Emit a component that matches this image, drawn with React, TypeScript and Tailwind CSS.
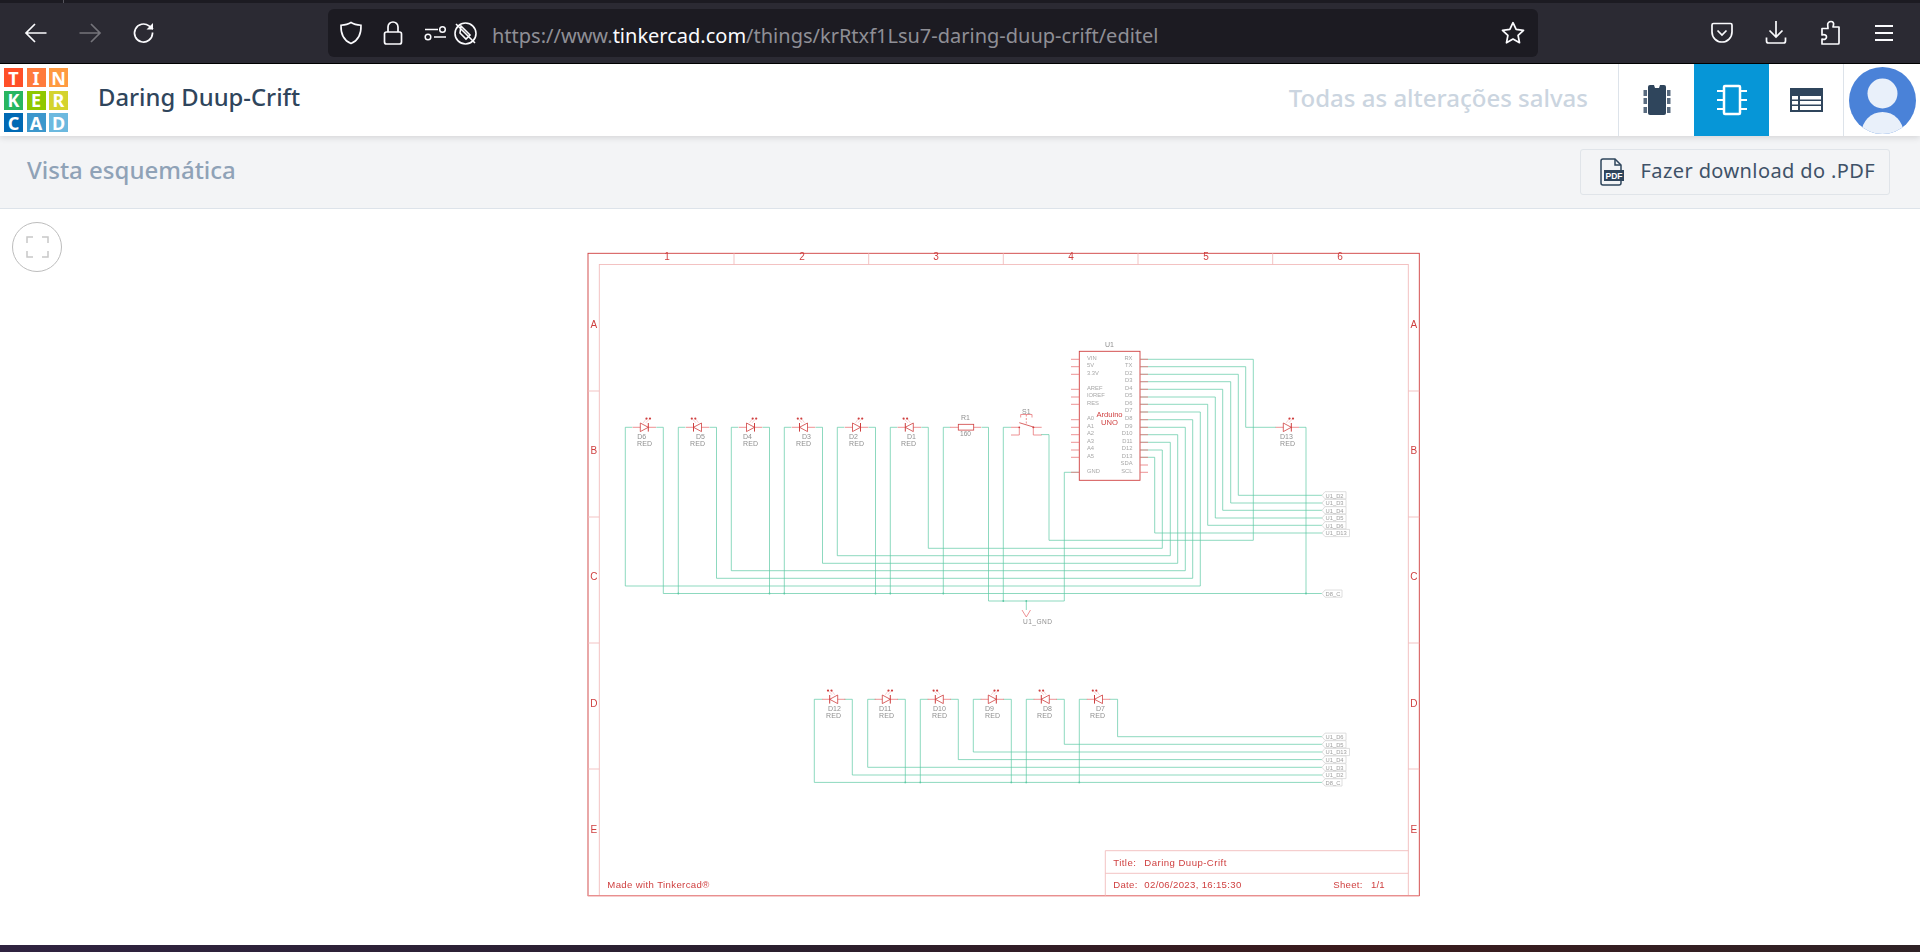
import React from "react";

const RED = "#cf3f3f";
const PIN = "#e8767a";
const WIRE = "#5cc8a4";
const GRAY = "#8f8f8f";
const F = "'Liberation Sans', Arial, sans-serif";

type LedP = { n: string; cx: number; cy: number; dir: 1 | -1; lx: number; rx: number; ly: number; ry: number };

function Led({ n, cx, cy, dir, lx, rx, ly, ry }: LedP) {
  const a = dir === 1 ? cx - 4 : cx + 4;
  const b = dir === 1 ? cx + 4 : cx - 4;
  const ax = dir === 1 ? 1 : -1;
  return (
    <g>
      <line x1={cx - 11.7} x2={cx + 11.7} y1={cy} y2={cy} stroke={PIN} strokeWidth={0.8} />
      <polygon points={`${a},${cy - 4.3} ${a},${cy + 4.3} ${b},${cy}`} fill="#fff" stroke={RED} strokeWidth={0.8} />
      <line x1={b} x2={b} y1={cy - 4.3} y2={cy + 4.3} stroke={RED} strokeWidth={1} />
      <line x1={cx - ax * 1} y1={cy - 4.5} x2={cx + ax * 2} y2={cy - 8.7} stroke="#f0a5a8" strokeWidth={0.5} />
      <line x1={cx + ax * 1.5} y1={cy - 4.5} x2={cx + ax * 5.5} y2={cy - 8.7} stroke="#f0a5a8" strokeWidth={0.5} />
      <circle cx={cx + ax * 2.2} cy={cy - 8.7} r={1.1} fill={RED} />
      <circle cx={cx + ax * 5.7} cy={cy - 8.7} r={1.1} fill={RED} />
      <text x={lx} y={ly} fontSize={7} fill={GRAY} fontFamily={F}>{n}</text>
      <text x={rx} y={ry} fontSize={7} fill={GRAY} fontFamily={F} textLength={15}>RED</text>
    </g>
  );
}

function Flag({ y, t, w }: { y: number; t: string; w: number }) {
  const x = 1322;
  return (
    <g>
      <polygon points={`${x},${y} ${x + 3},${y - 3.6} ${x + w},${y - 3.6} ${x + w},${y + 3.6} ${x + 3},${y + 3.6}`} fill="#fff" stroke="#d6d6d6" strokeWidth={0.8} />
      <text x={x + 3.5} y={y + 2.2} fontSize={5.8} fill="#a0a0a0" fontFamily={F}>{t}</text>
    </g>
  );
}

const pinsY = [359.3, 366.7, 374.3, 381.7, 389.3, 397, 404.3, 412, 419.7, 427.3, 434.7, 442.3, 450, 457.3, 465, 472.3];
const rightLabels = ["RX", "TX", "D2", "D3", "D4", "D5", "D6", "D7", "D8", "D9", "D10", "D11", "D12", "D13", "SDA", "SCL"];
const leftPins: [number, string][] = [
  [359.3, "VIN"], [366.7, "5V"], [374.3, "3.3V"], [389.3, "AREF"], [397, "IOREF"], [404.3, "RES"],
  [419.7, "A0"], [427.3, "A1"], [434.7, "A2"], [442.3, "A3"], [450, "A4"], [457.3, "A5"], [472.3, "GND"],
];

const topV: [number, number][] = [
  [625.3, 586], [663.3, 593.5], [678.3, 593.5], [716.5, 578.3], [731.3, 570.7], [769.5, 593.5], [784.3, 593.5],
  [822.5, 563.3], [837.3, 555.7], [875.5, 593.5], [890.3, 593.5], [928.3, 548.3], [943.3, 593.5], [988.5, 601], [1003.3, 601],
];
const topPairs: [number, number][] = [[625.3, 663.3], [678.3, 716.5], [731.3, 769.5], [784.3, 822.5], [837.3, 875.5], [890.3, 928.3], [943.3, 988.5]];

const wirePaths = [
  "M625.3 586H1200.3V412H1140",
  "M716.5 578.3H1192.7V419.7H1140",
  "M731.3 570.7H1185.3V427.3H1140",
  "M822.5 563.3H1177.7V434.7H1140",
  "M837.3 555.7H1170.3V442.3H1140",
  "M928.3 548.3H1162.3V450H1140",
  "M1049 434.6V540.3H1253.3V359.3H1140",
  "M1041 434.6H1049",
  "M1140 366.7H1245.7V427.3H1276",
  "M1140 374.3H1238.3V495.3H1322",
  "M1140 381.7H1230.7V503H1322",
  "M1140 389.3H1222.7V510.3H1322",
  "M1140 397H1215.3V518H1322",
  "M1140 404.3H1207.7V525.3H1322",
  "M1140 457.3H1154.7V533H1322",
  "M1299 427.3H1306V593.5H663.3",
  "M1306 593.5H1322",
  "M988.5 601H1064.3V472.3H1079",
  "M1026.3 601V610",
  "M1003.3 427.3H1011",
];

const bot: [number, number][] = [
  [814.3, 782.4], [852.3, 775], [867.7, 767.3], [905.3, 782.4], [920.3, 782.4], [958.3, 759.6], [973.3, 752],
  [1011.3, 782.4], [1026.3, 782.4], [1064.3, 744.3], [1079.3, 782.4], [1117.6, 736.7],
];

function Schematic() {
  const cols = [734, 868.7, 1003.3, 1138, 1272.7];
  const nums = [667, 802, 936, 1071, 1206, 1340];
  const rows = [391, 517, 643, 769];
  const letters: [string, number][] = [["A", 328], ["B", 454.3], ["C", 580.3], ["D", 706.5], ["E", 832.5]];
  return (
    <svg viewBox="585 250 838 650" width={838} height={650} className="block blur-[0.25px]">
      <rect x={588} y={253.3} width={831.3} height={642.4} fill="none" stroke={RED} strokeWidth={0.9} />
      <rect x={599.3} y={264.5} width={809} height={631} fill="none" stroke="#f2bcbc" strokeWidth={0.9} />
      <line x1={588} x2={1419} y1={895.7} y2={895.7} stroke="#e98f8f" strokeWidth={1.2} />
      {cols.map((x) => <line key={x} x1={x} x2={x} y1={253.3} y2={264.5} stroke="#f2bcbc" strokeWidth={0.9} />)}
      {nums.map((x, i) => <text key={x} x={x} y={259.5} textAnchor="middle" fontSize={10} fill={RED} fontFamily={F}>{i + 1}</text>)}
      {rows.map((y) => (
        <g key={y}>
          <line x1={588} x2={599.3} y1={y} y2={y} stroke="#f2bcbc" strokeWidth={0.9} />
          <line x1={1408.3} x2={1419.3} y1={y} y2={y} stroke="#f2bcbc" strokeWidth={0.9} />
        </g>
      ))}
      {letters.map(([l, y]) => (
        <g key={l}>
          <text x={593.8} y={y} textAnchor="middle" fontSize={10} fill={RED} fontFamily={F}>{l}</text>
          <text x={1413.8} y={y} textAnchor="middle" fontSize={10} fill={RED} fontFamily={F}>{l}</text>
        </g>
      ))}

      <g fill="none" stroke={WIRE} strokeWidth={0.7}>
        {topPairs.map(([a, b]) => <path key={a} d={`M${a} 427.3H${a + 7}M${b - 7} 427.3H${b}`} />)}
        {topV.map(([x, y]) => <line key={x} x1={x} x2={x} y1={427.3} y2={y} />)}
        {wirePaths.map((d) => <path key={d} d={d} />)}
        {bot.map(([x, y]) => <line key={x} x1={x} x2={x} y1={699.3} y2={y} />)}
        {[[814.3, 852.3], [867.7, 905.3], [920.3, 958.3], [973.3, 1011.3], [1026.3, 1064.3], [1079.3, 1117.6]].map(([a, b]) => (
          <path key={a} d={`M${a} 699.3H${a + 8}M${b - 8} 699.3H${b}`} />
        ))}
        <path d="M814.3 782.4H1322M852.3 775H1322M867.7 767.3H1322M958.3 759.6H1322M973.3 752H1322M1064.3 744.3H1322M1117.6 736.7H1322" />
      </g>
      <g fill={WIRE}>
        {[678.3, 769.5, 784.3, 875.5, 890.3, 943.3, 1306].map((x) => <circle key={x} cx={x} cy={593.5} r={0.9} />)}
        {[1003.3, 1026.3].map((x) => <circle key={x} cx={x} cy={601} r={0.9} />)}
        {[905.3, 920.3, 1011.3, 1026.3, 1079.3].map((x) => <circle key={x} cx={x} cy={782.4} r={0.9} />)}
      </g>

      <Led n="D6" cx={644.3} cy={427.3} dir={1} lx={637.3} rx={637} ly={438.8} ry={445.8} />
      <Led n="D5" cx={697.5} cy={427.3} dir={-1} lx={696} rx={690} ly={438.8} ry={445.8} />
      <Led n="D4" cx={750.5} cy={427.3} dir={1} lx={743} rx={743} ly={438.8} ry={445.8} />
      <Led n="D3" cx={803.5} cy={427.3} dir={-1} lx={802} rx={796} ly={438.8} ry={445.8} />
      <Led n="D2" cx={856.5} cy={427.3} dir={1} lx={849} rx={849} ly={438.8} ry={445.8} />
      <Led n="D1" cx={909.3} cy={427.3} dir={-1} lx={907} rx={901} ly={438.8} ry={445.8} />
      <Led n="D13" cx={1287.3} cy={427.3} dir={1} lx={1280} rx={1280} ly={438.8} ry={445.8} />

      <line x1={950} x2={981} y1={427.3} y2={427.3} stroke={PIN} strokeWidth={0.8} />
      <rect x={958.3} y={424.3} width={15.4} height={5.8} fill="#fff" stroke={RED} strokeWidth={0.8} />
      <text x={961} y={420} fontSize={7} fill={GRAY} fontFamily={F}>R1</text>
      <text x={960} y={435.5} fontSize={6.6} fill={GRAY} fontFamily={F}>160</text>

      <text x={1022} y={414} fontSize={7} fill={GRAY} fontFamily={F}>S1</text>
      <g fill="none" stroke={PIN} strokeWidth={0.8}>
        <path d="M1011 427.3H1019.3V435H1011M1041.7 427.3H1033.3V435H1041.7" />
        <path d="M1020.7 417.5V414.5H1032V417.5" />
        <path d="M1026.3 414.5V425" strokeDasharray="2 1.5" />
        <path d="M1019.3 422.7L1034.3 427.3" stroke={RED} />
      </g>
      <circle cx={1019.3} cy={427.3} r={0.9} fill={RED} />
      <circle cx={1033.3} cy={427.3} r={0.9} fill={RED} />

      <path d="M1022 610L1026.3 617L1030.5 610" fill="none" stroke={PIN} strokeWidth={0.8} />
      <text x={1023} y={623.5} fontSize={6.6} fill={GRAY} fontFamily={F} textLength={29}>U1_GND</text>

      <rect x={1079.3} y={351.3} width={60.7} height={129} fill="#fff" stroke={RED} strokeWidth={0.9} />
      {pinsY.map((y) => <line key={y} x1={1140} x2={1148} y1={y} y2={y} stroke={PIN} strokeWidth={0.8} />)}
      {leftPins.map(([y]) => <line key={y} x1={1071} x2={1079.3} y1={y} y2={y} stroke={PIN} strokeWidth={0.8} />)}
      {leftPins.map(([y, t]) => <text key={t} x={1087} y={y + 0.3} fontSize={5.8} fill="#a8a8a8" fontFamily={F}>{t}</text>)}
      {rightLabels.map((t, i) => <text key={t} x={1132.5} y={pinsY[i] + 0.3} textAnchor="end" fontSize={5.8} fill="#a8a8a8" fontFamily={F}>{t}</text>)}
      <text x={1109.5} y={347} textAnchor="middle" fontSize={7} fill={GRAY} fontFamily={F}>U1</text>
      <text x={1109.5} y={416.5} textAnchor="middle" fontSize={7.6} fill={RED} fontFamily={F}>Arduino</text>
      <text x={1109.5} y={424.5} textAnchor="middle" fontSize={7.6} fill={RED} fontFamily={F}>UNO</text>

      <Flag y={495.3} t="U1_D2" w={24} />
      <Flag y={503} t="U1_D3" w={24} />
      <Flag y={510.3} t="U1_D4" w={24} />
      <Flag y={518} t="U1_D5" w={24} />
      <Flag y={525.3} t="U1_D6" w={24} />
      <Flag y={533} t="U1_D13" w={27.5} />
      <Flag y={593.6} t="D8_C" w={20} />

      <Led n="D12" cx={833.7} cy={699.3} dir={-1} lx={828} rx={826} ly={711.3} ry={717.8} />
      <Led n="D11" cx={886.3} cy={699.3} dir={1} lx={879} rx={879} ly={711.3} ry={717.8} />
      <Led n="D10" cx={939.3} cy={699.3} dir={-1} lx={933} rx={932} ly={711.3} ry={717.8} />
      <Led n="D9" cx={992.3} cy={699.3} dir={1} lx={985} rx={985} ly={711.3} ry={717.8} />
      <Led n="D8" cx={1045.3} cy={699.3} dir={-1} lx={1043} rx={1037} ly={711.3} ry={717.8} />
      <Led n="D7" cx={1098.5} cy={699.3} dir={-1} lx={1096} rx={1090} ly={711.3} ry={717.8} />

      <Flag y={736.7} t="U1_D6" w={24} />
      <Flag y={744.3} t="U1_D5" w={24} />
      <Flag y={752} t="U1_D13" w={27.5} />
      <Flag y={759.6} t="U1_D4" w={24} />
      <Flag y={767.3} t="U1_D3" w={24} />
      <Flag y={775} t="U1_D2" w={24} />
      <Flag y={782.4} t="D8_C" w={20} />

      <path d="M1105.3 895.7V850.7H1408.3M1105.3 873.3H1408.3" fill="none" stroke="#f2bcbc" strokeWidth={0.9} />
      <g fontSize={9.6} fill={RED} fontFamily={F}>
        <text x={1113.3} y={866} textLength={22.5}>Title:</text>
        <text x={1144.3} y={866} textLength={82}>Daring Duup-Crift</text>
        <text x={1113.3} y={888} textLength={24}>Date:</text>
        <text x={1144.3} y={888} textLength={97}>02/06/2023, 16:15:30</text>
        <text x={1333.3} y={888} textLength={29}>Sheet:</text>
        <text x={1371} y={888} textLength={13.5}>1/1</text>
        <text x={607.3} y={888} textLength={102}>Made with Tinkercad®</text>
      </g>
    </svg>
  );
}

const ic = "fill-none stroke-current";

function Chrome() {
  return (
    <div className="flex flex-col bg-[#2b2a33] h-[64px] shrink-0 border-b border-black">
      <div className="flex h-[3px] bg-[#1c1b22]"><div className="w-[64px] border-r border-[#55545c]" /></div>
      <div className="flex items-center flex-1 pl-[9px] pr-[9px] text-[#fbfbfe]">
        <div className="flex items-center justify-center w-[54px] h-[30px]">
          <svg width="24" height="24" viewBox="0 0 24 24" className={ic} strokeWidth={1.7}><path d="M22.5 12H2M11 3L2 12l9 9" /></svg>
        </div>
        <div className="flex items-center justify-center w-[54px] h-[30px] text-[#75747b]">
          <svg width="24" height="24" viewBox="0 0 24 24" className={ic} strokeWidth={1.7}><path d="M1.5 12H22M13 3l9 9-9 9" /></svg>
        </div>
        <div className="flex items-center justify-center w-[54px] h-[30px]">
          <svg width="24" height="24" viewBox="0 0 24 24" className={ic} strokeWidth={1.7}><path d="M20.5 11.5v1a9 9 0 1 1-3.5-7.6L21 8" /><path d="M21 2v6.5h-6.5" fill="#fbfbfe" stroke="none" /></svg>
        </div>
        <div className="flex items-center h-[48px] w-[1210px] ml-[157px] bg-[#1c1b22] rounded-[6px] pl-[11px] pr-[12px]">
          <svg width="24" height="24" viewBox="0 0 24 24" className={`${ic} shrink-0`} strokeWidth={1.6}><path d="M12 1.5c3 2 6 2.5 10 2.7.3 8-1.7 14.800-10 18.300C3.700 19 1.700 12.200 2 4.200 6 4 9 3.500 12 1.500z" /></svg>
          <svg width="24" height="26" viewBox="0 0 24 26" className={`${ic} shrink-0 ml-[18px]`} strokeWidth={1.7}><rect x="3.500" y="12" width="17" height="12" rx="2" /><path d="M7 12V7a5 5 0 0 1 10 0v5" /></svg>
          <svg width="24" height="24" viewBox="0 0 24 24" className={`${ic} shrink-0 ml-[18px]`} strokeWidth={1.500}><path d="M2 8.500h13M11 16h12" /><circle cx="19.500" cy="8.500" r="2.800" /><circle cx="5" cy="16" r="2.800" /></svg>
          <svg width="25" height="25" viewBox="0 0 25 25" className={`${ic} shrink-0 ml-[6px]`} strokeWidth={1.600}><circle cx="12.500" cy="12.500" r="10.500" /><path d="M3 3l19 19M8 5l9 9-4 4-6-6z" /></svg>
          <span className="ml-[14px] pt-[5px] font-['Noto_Sans',sans-serif] text-[20px] whitespace-nowrap text-[#8f8f96]">https://www.<span className="text-[#fbfbfe]">tinkercad.com</span>/things/krRtxf1Lsu7-daring-duup-crift/editel</span>
          <svg width="26" height="26" viewBox="0 0 24 24" className={`${ic} shrink-0 ml-auto`} strokeWidth={1.600} strokeLinejoin="round"><path d="M12 2.500l2.900 6.200 6.800.8-5 4.700 1.300 6.800-6-3.400-6 3.400 1.300-6.800-5-4.700 6.800-.8z" /></svg>
        </div>
        <div className="flex items-center ml-auto">
          <div className="flex items-center justify-center w-[54px]">
            <svg width="24" height="24" viewBox="0 0 24 24" className={ic} strokeWidth={1.700}><path d="M3.500 2.500h17a1.500 1.500 0 0 1 1.500 1.500v7a10 10 0 0 1-20 0V4a1.500 1.500 0 0 1 1.500-1.500z" /><path d="M7.500 9.500L12 14l4.500-4.500" /></svg>
          </div>
          <div className="flex items-center justify-center w-[54px]">
            <svg width="24" height="26" viewBox="0 0 24 26" className={ic} strokeWidth={1.700}><path d="M12 1v16M5.500 10.500L12 17l6.500-6.500M2.500 17.500v3.500a2 2 0 0 0 2 2h15a2 2 0 0 0 2-2v-3.500" /></svg>
          </div>
          <div className="flex items-center justify-center w-[54px]">
            <svg width="24" height="26" viewBox="0 0 24 26" className={ic} strokeWidth={1.700} strokeLinejoin="round"><path d="M13 1.500c2 0 3 1.500 2.500 3.500l-.5 2h6v16a1 1 0 0 1-1 1H4v-5c3 1 4.500-.5 4.500-2S7 14 4 15V8.500h6L9.700 5C9.400 3 11 1.500 13 1.500z" /></svg>
          </div>
          <div className="flex items-center justify-center w-[54px]">
            <svg width="20" height="18" viewBox="0 0 20 18" className={ic} strokeWidth={1.800}><path d="M1 2h18M1 9h18M1 16h18" /></svg>
          </div>
        </div>
      </div>
    </div>
  );
}

const logoCells: [string, string][] = [
  ["T", "bg-[#ff4f28]"], ["I", "bg-[#ff7b3c]"], ["N", "bg-[#ff9a40]"],
  ["K", "bg-[#27b660]"], ["E", "bg-[#8fc800]"], ["R", "bg-[#d4d32e]"],
  ["C", "bg-[#0069b4]"], ["A", "bg-[#3c97cc]"], ["D", "bg-[#6cb9df]"],
];

function Header() {
  return (
    <div className="relative z-10 flex items-stretch h-[72px] bg-white shadow-[0_2px_6px_rgba(0,0,0,0.12)] shrink-0">
      <div className="grid grid-cols-3 grid-rows-3 gap-[3.500px] w-[64px] h-[64px] ml-[4px] mt-[4px]">
        {logoCells.map(([l, c]) => (
          <div key={l} className={`flex items-center justify-center text-white font-bold text-[18px] leading-none font-['Noto_Sans',sans-serif] ${c}`}>{l}</div>
        ))}
      </div>
      <div className="flex items-center ml-[30px] pb-[4px] font-['Noto_Sans',sans-serif] font-medium text-[23.800px] text-[#2f455c]">Daring Duup-Crift</div>
      <div className="flex items-center ml-auto mr-[30px] pb-[4px] font-['Noto_Sans',sans-serif] font-medium text-[24px] text-[#cbd5e0]">Todas as alterações salvas</div>
      <div className="flex items-center justify-center w-[76px] border-l border-[#dde3ea]">
        <svg width="28" height="32" viewBox="0 0 28 32">
          <rect x="5" y="1" width="18" height="30" rx="2" fill="#2f455c" />
          <path d="M11 1h6l-1 3h-4z" fill="#fff" />
          <g fill="#5a6c80">
            <rect x="0.500" y="6" width="3.500" height="6" />
            <rect x="0.500" y="14" width="3.500" height="6" />
            <rect x="0.500" y="23" width="3.500" height="6" />
            <rect x="24" y="6" width="3.500" height="6" />
            <rect x="24" y="14" width="3.500" height="6" />
            <rect x="24" y="23" width="3.500" height="6" />
          </g>
        </svg>
      </div>
      <div className="flex items-center justify-center w-[75px] bg-[#0696d7]">
        <svg width="32" height="32" viewBox="0 0 32 32" fill="none" stroke="#fff" strokeWidth={2.500}>
          <rect x="8" y="2" width="16" height="28" rx="1" />
          <path d="M1 7h6M1 16h6M1 25h6M25 7h6M25 16h6M25 25h6" strokeWidth={2} />
        </svg>
      </div>
      <div className="flex items-center justify-center w-[75px] border-r border-[#dde3ea]">
        <svg width="33" height="24" viewBox="0 0 33 24">
          <rect width="33" height="24" fill="#2f455c" />
          <g fill="#fff">
            <rect x="2" y="8" width="6" height="3.500" />
            <rect x="2" y="13" width="6" height="3.500" />
            <rect x="2" y="18" width="6" height="4" />
            <rect x="10" y="8" width="21" height="3.500" />
            <rect x="10" y="13" width="21" height="3.500" />
            <rect x="10" y="18" width="21" height="4" />
          </g>
        </svg>
      </div>
      <div className="flex items-center pl-[5px] pr-[4px]">
        <svg width="67" height="67" viewBox="0 0 67 67" className="block">
          <defs><clipPath id="av"><circle cx="33.500" cy="33.500" r="33.500" /></clipPath></defs>
          <g clipPath="url(#av)">
            <rect width="67" height="67" fill="#4a82d8" />
            <circle cx="33.500" cy="26.500" r="15" fill="#e9f0fa" />
            <ellipse cx="33.500" cy="66" rx="21" ry="21" fill="#e9f0fa" />
          </g>
        </svg>
      </div>
    </div>
  );
}

function SubBar() {
  return (
    <div className="flex items-center justify-between h-[73px] bg-[#f3f4f6] border-b border-[#dde3ea] pl-[27px] pr-[30.500px] shrink-0">
      <span className="pb-[4px] font-['Noto_Sans',sans-serif] font-medium text-[24px] text-[#8fa2b7]">Vista esquemática</span>
      <div className="flex items-center h-[46px] w-[310px] border border-[#e0e4e9] rounded-[3px] pl-[19px]">
        <svg width="24" height="28" viewBox="0 0 24 28" className="shrink-0">
          <path d="M1 3a2 2 0 0 1 2-2h12l6 6v5M1 3v22a2 2 0 0 0 2 2h16a2 2 0 0 0 2-2v-2" fill="none" stroke="#2f455c" strokeWidth={1.500} />
          <path d="M15 1v6h6" fill="none" stroke="#2f455c" strokeWidth={1.500} />
          <rect x="4" y="12" width="20" height="11" fill="#2f455c" />
          <text x="14" y="21" textAnchor="middle" fontSize={8.500} fontWeight={700} fill="#fff" fontFamily={F}>PDF</text>
        </svg>
        <span className="ml-[17px] pb-[2px] font-['Noto_Sans',sans-serif] text-[20px] tracking-[0.4px] whitespace-nowrap text-[#3f5268]">Fazer download do .PDF</span>
      </div>
    </div>
  );
}

export default function App() {
  return (
    <div className="flex flex-col h-[952px] w-[1920px] overflow-hidden bg-white">
      <Chrome />
      <Header />
      <SubBar />
      <div className="relative flex-1 bg-white">
        <div className="absolute left-[12px] top-[13px] flex items-center justify-center w-[50px] h-[50px] rounded-full border border-[#bdbdbd] bg-white">
          <svg width="23" height="22" viewBox="0 0 23 22" fill="none" stroke="#c8c8c8" strokeWidth={1.500}>
            <path d="M1 7V1h6M16 1h6v6M22 15v6h-6M7 21H1v-6" />
          </svg>
        </div>
        <div className="pt-[41px] pl-[585px]"><Schematic /></div>
      </div>
      <div className="h-[7px] shrink-0 bg-[linear-gradient(90deg,#2f2340_0%,#2a1f2e_40%,#3a1a1c_70%,#2f2226_100%)]" />
    </div>
  );
}
